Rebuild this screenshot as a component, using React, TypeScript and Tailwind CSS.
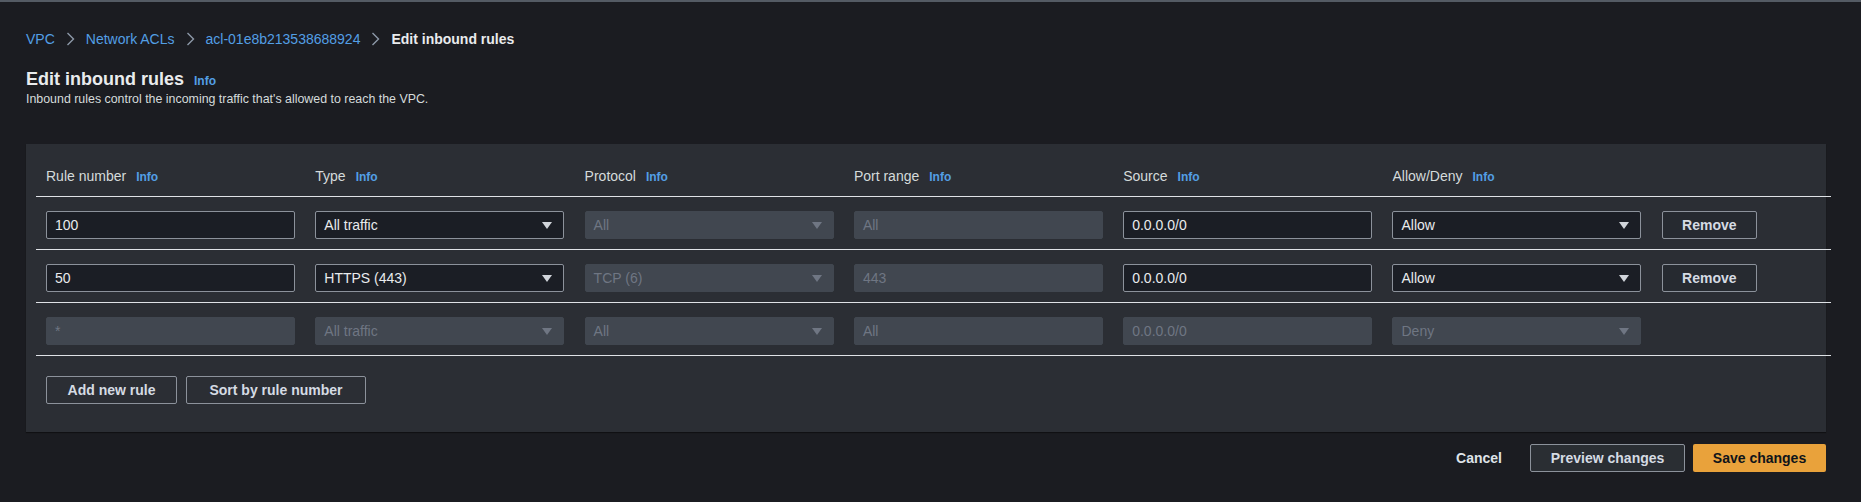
import React from 'react';

type Field = {
  kind: 'input' | 'select';
  value: string;
  disabled?: boolean;
};

type Rule = {
  fields: Field[];
  removable: boolean;
};

const columns = ['Rule number', 'Type', 'Protocol', 'Port range', 'Source', 'Allow/Deny'];

const rules: Rule[] = [
  {
    removable: true,
    fields: [
      { kind: 'input', value: '100' },
      { kind: 'select', value: 'All traffic' },
      { kind: 'select', value: 'All', disabled: true },
      { kind: 'input', value: 'All', disabled: true },
      { kind: 'input', value: '0.0.0.0/0' },
      { kind: 'select', value: 'Allow' },
    ],
  },
  {
    removable: true,
    fields: [
      { kind: 'input', value: '50' },
      { kind: 'select', value: 'HTTPS (443)' },
      { kind: 'select', value: 'TCP (6)', disabled: true },
      { kind: 'input', value: '443', disabled: true },
      { kind: 'input', value: '0.0.0.0/0' },
      { kind: 'select', value: 'Allow' },
    ],
  },
  {
    removable: false,
    fields: [
      { kind: 'input', value: '*', disabled: true },
      { kind: 'select', value: 'All traffic', disabled: true },
      { kind: 'select', value: 'All', disabled: true },
      { kind: 'input', value: 'All', disabled: true },
      { kind: 'input', value: '0.0.0.0/0', disabled: true },
      { kind: 'select', value: 'Deny', disabled: true },
    ],
  },
];

const Info: React.FC = () => (
  <a href="#" className="text-[12px] font-bold leading-[16px] text-[#539fe5]">
    Info
  </a>
);

const Chevron: React.FC = () => (
  <svg className="mx-[11px] h-[14px] w-[9px] text-[#8d99a8]" viewBox="0 0 9 14" fill="none" aria-hidden>
    <path d="M1.5 1l6 6-6 6" stroke="currentColor" strokeWidth={1.4} />
  </svg>
);

const Triangle: React.FC<{ disabled?: boolean }> = ({ disabled }) => (
  <svg
    className={disabled ? 'h-[7px] w-[10px] text-[#6f7683]' : 'h-[7px] w-[10px] text-[#d1d5db]'}
    viewBox="0 0 10 7"
    aria-hidden
  >
    <path d="M0 0h10L5 7z" fill="currentColor" />
  </svg>
);

const FieldBox: React.FC<{ field: Field }> = ({ field }) => {
  const base = 'flex h-[28px] items-center justify-between rounded-[2px] border pl-[8px] pr-[11px] text-[14px]';
  const look = field.disabled
    ? 'border-[#414750] bg-[#414750] text-[#6f7683]'
    : 'border-[#8c929b] bg-[#1b1e25] text-[#e9ebed]';
  return (
    <div className={`${base} ${look}`}>
      <span>{field.value}</span>
      {field.kind === 'select' && <Triangle disabled={field.disabled} />}
    </div>
  );
};

const Divider: React.FC = () => <div className="-ml-[10px] -mr-[25px] h-px bg-[#dfe2e6]" />;

// width is set by the caller, text stays on one line
const OutlineButton: React.FC<{ children: React.ReactNode; className?: string }> = ({ children, className }) => (
  <button
    type="button"
    className={`h-[28px] whitespace-nowrap rounded-[2px] border border-[#8c929b] text-center text-[14px] font-bold text-[#d5dbe3] ${className ?? ''}`}
  >
    {children}
  </button>
);

const grid = 'grid grid-cols-[repeat(6,249px)_95px] gap-x-[20.3px]';

export default function App() {
  return (
    <div
      className="min-h-screen border-t-2 border-[#545b64] bg-[#1b1c21] pl-[26px] pr-[35px] pt-[27px] pb-[30px]"
      style={{ fontFamily: '"Liberation Sans", Arial, sans-serif' }}
    >
      <nav className="flex h-[20px] items-center text-[14px] leading-[20px]">
        <a href="#" className="text-[#539fe5]">VPC</a>
        <Chevron />
        <a href="#" className="text-[#539fe5]">Network ACLs</a>
        <Chevron />
        <a href="#" className="text-[#539fe5]">acl-01e8b213538688924</a>
        <Chevron />
        <span className="font-bold text-[#e9ebed]">Edit inbound rules</span>
      </nav>

      <div className="mt-[18px] flex items-baseline gap-[10px]">
        <h1 className="text-[18px] font-bold leading-[24px] text-[#e9ebed]">Edit inbound rules</h1>
        <Info />
      </div>
      <p className="text-[12.4px] leading-[16px] text-[#d5dbdb]">
        Inbound rules control the incoming traffic that's allowed to reach the VPC.
      </p>

      <section className="mt-[37px] bg-[#2b2e34] px-[20px] pt-[20px] pb-[28px] shadow-[0_1px_1px_rgba(0,0,0,0.4)]">
        <div className={`${grid} mb-[8px] h-[24px] items-center`}>
          {columns.map((c) => (
            <div key={c} className="flex items-baseline gap-[10px]">
              <span className="text-[14px] text-[#d5dbdb]">{c}</span>
              <Info />
            </div>
          ))}
        </div>
        <Divider />

        {rules.map((rule, i) => (
          <div key={i}>
            <div className={`${grid} pt-[14px] pb-[10px]`}>
              {rule.fields.map((f, j) => (
                <FieldBox key={j} field={f} />
              ))}
              {rule.removable ? <OutlineButton className="w-[95px] bg-[#262a30]">Remove</OutlineButton> : <div />}
            </div>
            <Divider />
          </div>
        ))}

        <div className="mt-[20px] flex gap-[9px]">
          <OutlineButton className="w-[131px]">Add new rule</OutlineButton>
          <OutlineButton className="w-[180px]">Sort by rule number</OutlineButton>
        </div>
      </section>

      <div className="mt-[12px] flex justify-end gap-[8px]">
        <button type="button" className="h-[28px] px-[20px] text-[14px] font-bold text-[#dfe3e8]">
          Cancel
        </button>
        <OutlineButton className="w-[155px] bg-[#2a2e33]">Preview changes</OutlineButton>
        <button
          type="button"
          className="h-[28px] w-[133px] whitespace-nowrap rounded-[2px] bg-[#e9a23b] text-[14px] font-bold text-[#0f141a]"
        >
          Save changes
        </button>
      </div>
    </div>
  );
}
